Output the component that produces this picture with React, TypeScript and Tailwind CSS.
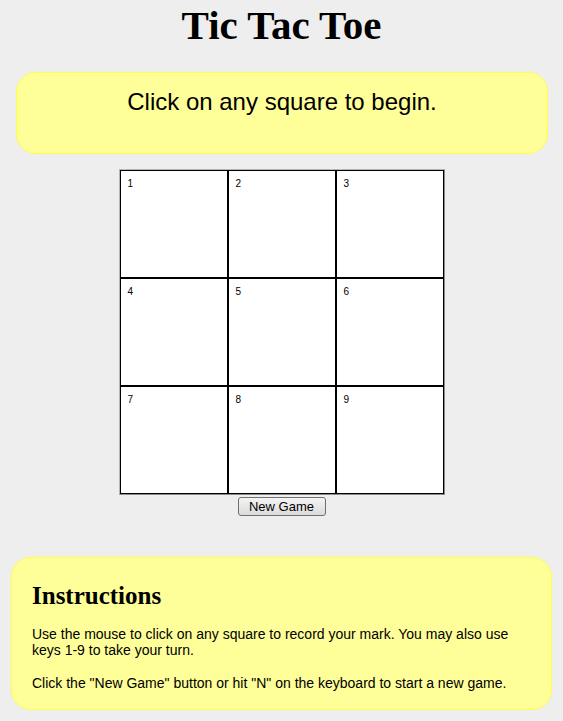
const cells = [1, 2, 3, 4, 5, 6, 7, 8, 9]

export default function App() {
  return (
    <div className="min-h-[721px] w-full bg-[#eeeeee] pb-[12px] font-['Liberation_Sans',Arial,sans-serif] text-black">
      <h1 className="pt-[2px] text-center font-['Liberation_Serif',serif] text-[41px] font-bold leading-[46px]">
        Tic Tac Toe
      </h1>

      <div className="ml-[16px] mr-[15px] mt-[24px] h-[82px] rounded-[20px] border border-[#ffff44] bg-[#ffff99] pt-[15px] text-center text-[24px] leading-[28px]">
        Click on any square to begin.
      </div>

      <div className="mx-auto mt-[15px] w-fit border border-t-[#b5b5b5] border-l-[#b5b5b5] border-r-[#8a8a8a] border-b-[#8a8a8a]">
        <div className="grid grid-cols-[108px_108px_108px]">
          {cells.map((n) => (
            <div
              key={n}
              className="h-[108px] w-[108px] cursor-pointer border border-black bg-white pl-[7px] pt-[8px] text-[10px] leading-[10px]"
            >
              {n}
            </div>
          ))}
        </div>
      </div>

      <div className="mt-[2px] flex justify-center">
        <button className="h-[19px] w-[88px] rounded-[3px] border border-[#707070] bg-gradient-to-b from-[#f4f4f4] to-[#dcdcdc] text-[13px] leading-[15px]">
          New Game
        </button>
      </div>

      <div className="mx-[11px] mt-[41px] h-[153px] rounded-[20px] border border-[#ffff44] bg-[#ffff99] px-[20px] pt-[23px] text-[14px] leading-[16px]">
        <h2 className="font-['Liberation_Serif',serif] text-[25px] font-bold leading-[30px]">
          Instructions
        </h2>
        <p className="mt-[15px]">
          Use the mouse to click on any square to record your mark. You may also use keys 1-9 to take your turn.
        </p>
        <p className="mt-[17px]">
          Click the "New Game" button or hit "N" on the keyboard to start a new game.
        </p>
      </div>
    </div>
  )
}
